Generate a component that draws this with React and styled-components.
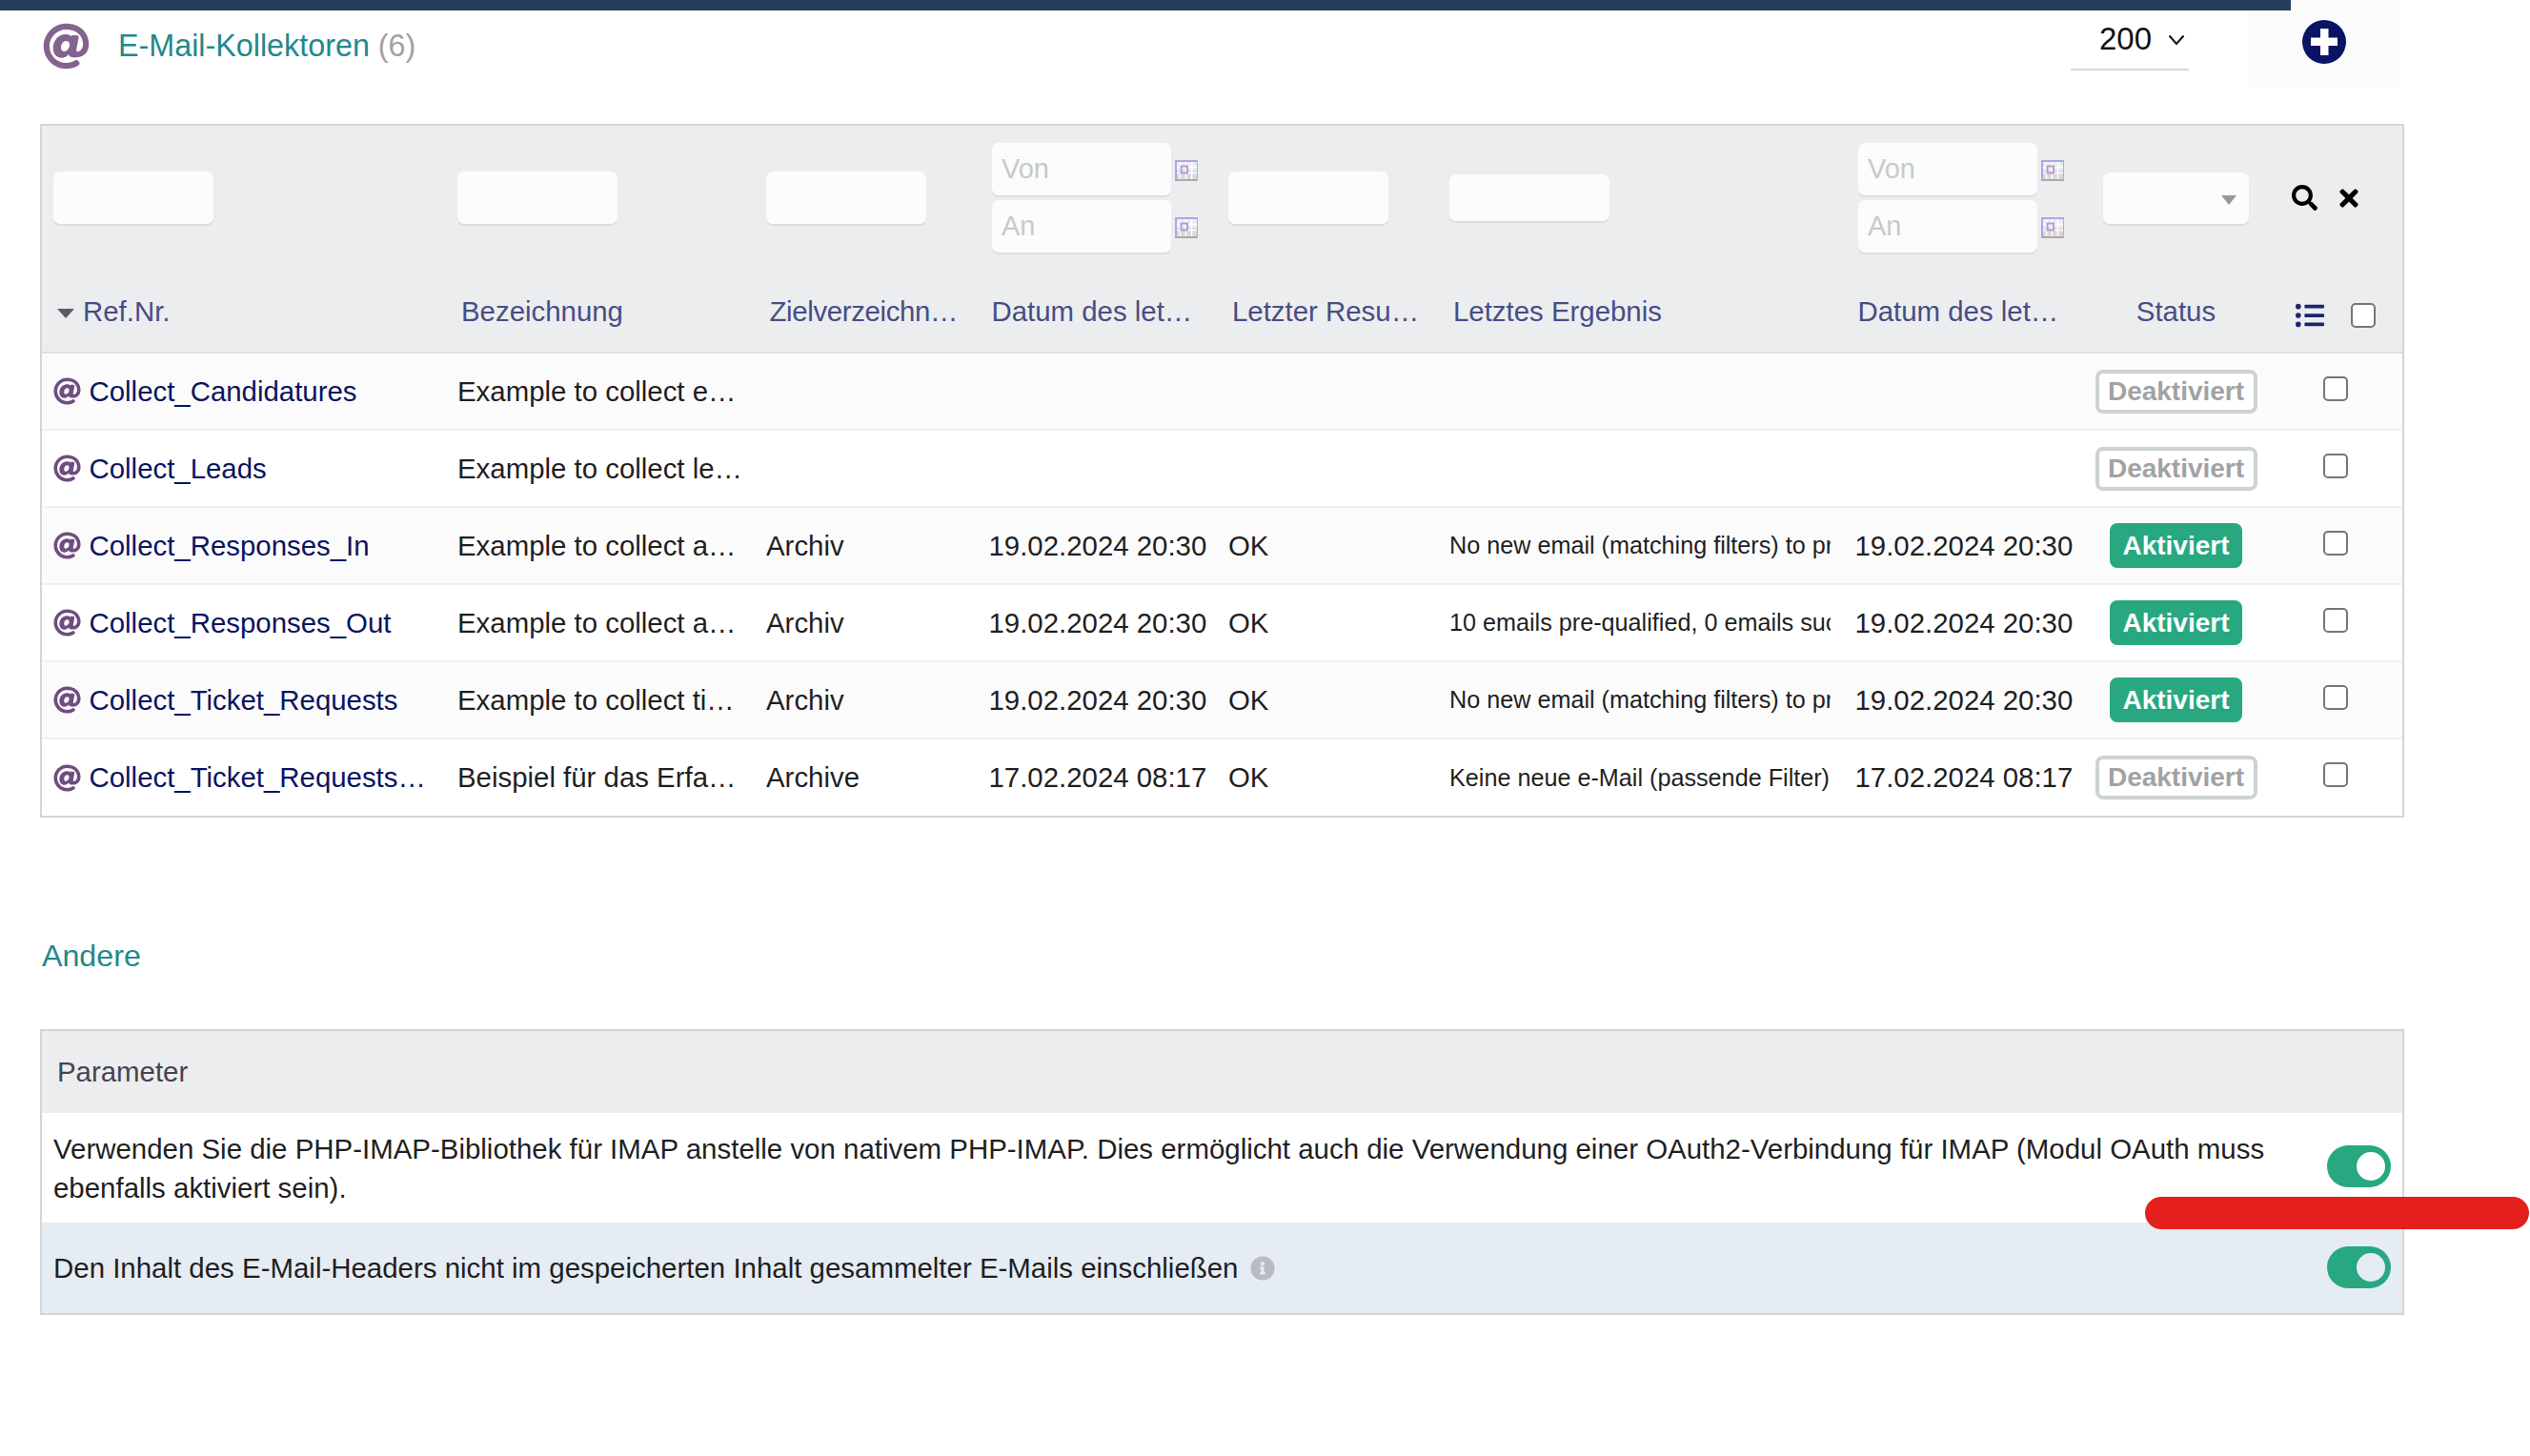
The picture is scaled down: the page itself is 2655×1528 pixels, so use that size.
import React from "react";
import styled, { createGlobalStyle } from "styled-components";
import { FaAt, FaSearch, FaTimes, FaListUl, FaInfoCircle } from "react-icons/fa";

const GlobalStyle = createGlobalStyle`
  html, body { margin: 0; padding: 0; background: #fff; }
  body { font-family: "Liberation Sans", Arial, sans-serif; color: #1f1f1f; }
  * { box-sizing: border-box; }
`;

const COLS = "424px 324px 234px 251px 232px 426px 260px 177px 149px";

const Page = styled.div`
  position: relative;
  width: 2655px;
  padding-left: 42px;
  height: 1528px;
  overflow: hidden;
`;
const TopBar = styled.div`
  position: absolute;
  left: 0;
  top: 0;
  width: 2404px;
  height: 11px;
  background: #283d5c;
  z-index: 2;
`;
const Annotation = styled.div`
  position: absolute;
  left: 2251px;
  top: 1255.5px;
  width: 403px;
  height: 34px;
  border-radius: 17px;
  background: #e51e1e;
  z-index: 3;
`;
const Content = styled.div`
  width: 2481px;
`;
const HeaderRow = styled.header`
  display: flex;
  height: 92px;
  margin-bottom: 38px;
`;
const TitleGroup = styled.div`
  display: flex;
  align-items: center;
  padding-top: 5px;
  padding-left: 3px;
  color: #84638f;
`;
const Title = styled.h1`
  margin: 0 0 0 30px;
  font-size: 32.3px;
  font-weight: 400;
  color: #23888c;
  span { color: #a2a2a2; }
`;
const PageSize = styled.div`
  display: flex;
  align-items: center;
  margin-left: auto;
  width: 124px;
  height: 74px;
  padding: 10px 0 0 30px;
  font-size: 33px;
  color: #111;
  border-bottom: 2px solid #d8d8d8;
`;
const Chevron = styled.svg`
  margin-left: 17px;
  width: 18px;
  height: 12px;
  margin-top: 2px;
`;
const AddBox = styled.div`
  display: flex;
  align-items: center;
  justify-content: center;
  width: 160px;
  height: 92px;
  padding-bottom: 4px;
  margin: 0 4px 0 62px;
  background: #fbfbfb;
`;
const Panel = styled.section`
  border: 2px solid #d5d5d5;
`;
const Filters = styled.div`
  display: grid;
  grid-template-columns: ${COLS};
  align-items: center;
  height: 151px;
  background: #ecedef;
`;
const Labels = styled.div`
  display: grid;
  grid-template-columns: ${COLS};
  align-items: center;
  height: 88px;
  padding-top: 1px;
  background: #ecedef;
  border-bottom: 2px solid #dddedf;
`;
const FilterCell = styled.div`
  padding-left: ${(p) => p.$pad || 12}px;
`;
const FilterInput = styled.input`
  display: block;
  width: ${(p) => p.$w || 168}px;
  height: ${(p) => p.$h || 55}px;
  padding: 0 10px;
  border: 0;
  outline: 0;
  border-radius: 7px;
  background: #fbfcfc;
  box-shadow: 0 2px 0 #dcdddf;
  font: 29px "Liberation Sans", Arial, sans-serif;
  &::placeholder { color: #c9c9c9; opacity: 1; }
`;
const DateRow = styled.div`
  display: flex;
  align-items: center;
  & + & { margin-top: 5.5px; }
`;
const CalendarIcon = styled.svg`
  width: 24px;
  height: 22px;
  margin: 3.5px 0 0 4px;
  flex: none;
`;
const SelectBox = styled.div`
  position: relative;
  width: 153px;
  height: 54px;
  border-radius: 7px;
  background: #fbfcfc;
  box-shadow: 0 2px 0 #dcdddf;
  &::after {
    content: "";
    position: absolute;
    right: 13px;
    top: 24px;
    border-left: 8px solid transparent;
    border-right: 8px solid transparent;
    border-top: 10px solid #9a9a9a;
  }
`;
const ActionCell = styled.div`
  display: flex;
  align-items: center;
  padding-left: 33px;
  color: #000;
`;
const ClearIcon = styled.span`
  display: flex;
  margin-left: 19px;
`;
const Label = styled.div`
  padding-left: ${(p) => (p.$center ? 0 : p.$pad || 16)}px;
  font-size: 29.4px;
  color: #474d85;
  white-space: nowrap;
  letter-spacing: ${(p) => (p.$tight ? "-0.35px" : "normal")};
  text-align: ${(p) => (p.$center ? "center" : "left")};
`;
const SortMark = styled.i`
  display: inline-block;
  width: 0;
  height: 0;
  margin: 0 9px 3px 0;
  border-left: 9px solid transparent;
  border-right: 9px solid transparent;
  border-top: 10px solid #5c5c66;
`;
const LabelTools = styled.div`
  display: flex;
  align-items: center;
  padding: 9px 0 0 37px;
  color: #1c2573;
`;
const Check = styled.input.attrs({ type: "checkbox" })`
  appearance: none;
  flex: none;
  display: block;
  width: 26px;
  height: 26px;
  margin: 0;
  background: #fff;
  border: 2px solid #767676;
  border-radius: 5px;
`;
const HeadCheck = styled(Check)`
  margin-left: 28px;
`;
const Row = styled.div`
  display: grid;
  grid-template-columns: ${COLS};
  align-items: center;
  height: 81px;
  background: ${(p) => (p.$odd ? "#fbfbfb" : "#fff")};
  border-bottom: 2px solid #f0f0f0;
  &:last-child { border-bottom: 0; height: 80px; }
`;
const Cell = styled.div`
  margin-left: ${(p) => (p.$date ? 11.5 : 12)}px;
  margin-right: ${(p) => (p.$small ? 14 : 0)}px;
  min-width: 0;
  font-size: ${(p) => (p.$small ? "25.2px" : "29.4px")};
  white-space: nowrap;
  overflow: hidden;
`;
const NameCell = styled(Cell)`
  display: flex;
  align-items: center;
  color: #6f4d80;
`;
const NameLink = styled.a`
  margin-left: 8.5px;
  color: #0b1460;
`;
const StatusCell = styled.div`
  display: flex;
  justify-content: center;
`;
const Badge = styled.span`
  display: flex;
  align-items: center;
  justify-content: center;
  border-radius: 8px;
  font-size: 28px;
  font-weight: 700;
  ${(p) =>
    p.$on
      ? "width: 139px; height: 47px; background: #27a881; color: #fff;"
      : "width: 170px; height: 46px; background: #fff; color: #a2a2a2; border: 4px solid #ccd3d2;"}
`;
const CheckCell = styled.div`
  padding: 0 0 6px 66px;
`;
const SectionTitle = styled.h2`
  margin: 125px 0 57px 2px;
  font-size: 32.2px;
  line-height: 40px;
  font-weight: 400;
  color: #23888c;
`;
const ParamHead = styled.div`
  display: flex;
  align-items: center;
  height: 86px;
  padding-left: 16px;
  background: #ecedef;
  font-size: 29.4px;
  color: #444450;
`;
const ParamRow = styled.div`
  display: flex;
  align-items: center;
  justify-content: space-between;
  height: ${(p) => p.$h}px;
  padding: 0 12px;
  background: ${(p) => p.$bg};
  font-size: 29.45px;
  line-height: 41px;
  color: #1f1f1f;
`;
const ParamText = styled.div`
  width: 2350px;
  display: flex;
  flex-wrap: wrap;
  align-items: center;
`;
const InfoMark = styled.span`
  display: flex;
  margin-left: 13px;
  color: #b8bcc2;
`;
const Toggle = styled.div`
  position: relative;
  flex: none;
  width: 67px;
  height: 44px;
  margin-bottom: ${(p) => p.$lift || 0}px;
  border-radius: 22px;
  background: #27a881;
  &::after {
    content: "";
    position: absolute;
    right: 6px;
    top: 7px;
    width: 30px;
    height: 30px;
    border-radius: 50%;
    background: ${(p) => p.$knob};
  }
`;

const Calendar = () => (
  <CalendarIcon viewBox="0 0 24 22">
    <rect width="24" height="22" fill="#ecebf3" />
    <rect y="11" width="24" height="11" fill="#d8d8dc" />
    <path d="M5.5 2v20M11.5 2v20M17.5 2v20M0 7.5h24M0 13.5h24" stroke="#fff" strokeWidth="1.5" />
    <rect x="6.5" y="6.5" width="6.5" height="7" fill="none" stroke="#b99bd0" strokeWidth="2" />
    <path d="M0 1h24M1 0v22" stroke="#a9a8e6" strokeWidth="2" />
    <path d="M0 21h24" stroke="#aaaaaa" strokeWidth="2" />
    <path d="M23.500 2v20" stroke="#b4b4bc" strokeWidth="1" />
  </CalendarIcon>
);

const rows = [
  { name: "Collect_Candidatures", desc: "Example to collect e…" },
  { name: "Collect_Leads", desc: "Example to collect le…" },
  { name: "Collect_Responses_In", desc: "Example to collect a…", dir: "Archiv", date: "19.02.2024 20:30", res: "OK", msg: "No new email (matching filters) to process", on: true },
  { name: "Collect_Responses_Out", desc: "Example to collect a…", dir: "Archiv", date: "19.02.2024 20:30", res: "OK", msg: "10 emails pre-qualified, 0 emails successfully processed", on: true },
  { name: "Collect_Ticket_Requests", desc: "Example to collect ti…", dir: "Archiv", date: "19.02.2024 20:30", res: "OK", msg: "No new email (matching filters) to process", on: true },
  { name: "Collect_Ticket_Requests…", desc: "Beispiel für das Erfa…", dir: "Archive", date: "17.02.2024 08:17", res: "OK", msg: "Keine neue e-Mail (passende Filter)" },
];

export default function App() {
  return (
    <Page>
      <GlobalStyle />
      <TopBar />
      <Annotation />
      <Content>
        <HeaderRow>
          <TitleGroup>
            <FaAt size={49} />
            <Title>
              E-Mail-Kollektoren <span>(6)</span>
            </Title>
          </TitleGroup>
          <PageSize>
            200
            <Chevron viewBox="0 0 18 12">
              <path d="M1.500 1.500 9 10l7.500-8.500" fill="none" stroke="#111" strokeWidth="2" />
            </Chevron>
          </PageSize>
          <AddBox>
            <svg width="46" height="46" viewBox="0 0 46 46">
              <circle cx="23" cy="23" r="23" fill="#0a1464" />
              <path d="M19 9h8.500v9.500H37v8.500h-9.500v10H19V27H9v-8.500h10z" fill="#fff" />
            </svg>
          </AddBox>
        </HeaderRow>

        <Panel>
          <Filters>
            <FilterCell><FilterInput /></FilterCell>
            <FilterCell><FilterInput /></FilterCell>
            <FilterCell><FilterInput /></FilterCell>
            <FilterCell $pad={15}>
              <DateRow><FilterInput $w={188} $h={54.5} placeholder="Von" /><Calendar /></DateRow>
              <DateRow><FilterInput $w={188} $h={54.5} placeholder="An" /><Calendar /></DateRow>
            </FilterCell>
            <FilterCell><FilterInput /></FilterCell>
            <FilterCell><FilterInput $h={49} /></FilterCell>
            <FilterCell $pad={15}>
              <DateRow><FilterInput $w={188} $h={54.5} placeholder="Von" /><Calendar /></DateRow>
              <DateRow><FilterInput $w={188} $h={54.5} placeholder="An" /><Calendar /></DateRow>
            </FilterCell>
            <FilterCell><SelectBox /></FilterCell>
            <ActionCell>
              <FaSearch size={27} />
              <ClearIcon><FaTimes size={28} /></ClearIcon>
            </ActionCell>
          </Filters>
          <Labels>
            <Label><SortMark />Ref.Nr.</Label>
            <Label>Bezeichnung</Label>
            <Label $pad={15.5} $tight>Zielverzeichn…</Label>
            <Label $pad={14.5}>Datum des let…</Label>
            <Label>Letzter Resu…</Label>
            <Label>Letztes Ergebnis</Label>
            <Label $pad={14.5}>Datum des let…</Label>
            <Label $center>Status</Label>
            <LabelTools>
              <FaListUl size={30} />
              <HeadCheck />
            </LabelTools>
          </Labels>
          {rows.map((r, i) => (
            <Row key={r.name} $odd={i % 2 === 0}>
              <NameCell>
                <FaAt size={29} />
                <NameLink>{r.name}</NameLink>
              </NameCell>
              <Cell>{r.desc}</Cell>
              <Cell>{r.dir}</Cell>
              <Cell $date>{r.date}</Cell>
              <Cell>{r.res}</Cell>
              <Cell $small>{r.msg}</Cell>
              <Cell $date>{r.date}</Cell>
              <StatusCell>
                <Badge $on={r.on}>{r.on ? "Aktiviert" : "Deaktiviert"}</Badge>
              </StatusCell>
              <CheckCell><Check /></CheckCell>
            </Row>
          ))}
        </Panel>

        <SectionTitle>Andere</SectionTitle>

        <Panel>
          <ParamHead>Parameter</ParamHead>
          <ParamRow $h={115} $bg="#fff">
            <ParamText>
              Verwenden Sie die PHP-IMAP-Bibliothek für IMAP anstelle von nativem PHP-IMAP. Dies ermöglicht auch die Verwendung einer OAuth2-Verbindung für IMAP (Modul OAuth muss ebenfalls aktiviert sein).
            </ParamText>
            <Toggle $knob="#fff" $lift={3} />
          </ParamRow>
          <ParamRow $h={95} $bg="#e6ecf4">
            <ParamText>
              Den Inhalt des E-Mail-Headers nicht im gespeicherten Inhalt gesammelter E-Mails einschließen
              <InfoMark><FaInfoCircle size={26} /></InfoMark>
            </ParamText>
            <Toggle $knob="#e6ecf4" $lift={2} />
          </ParamRow>
        </Panel>
      </Content>
    </Page>
  );
}
